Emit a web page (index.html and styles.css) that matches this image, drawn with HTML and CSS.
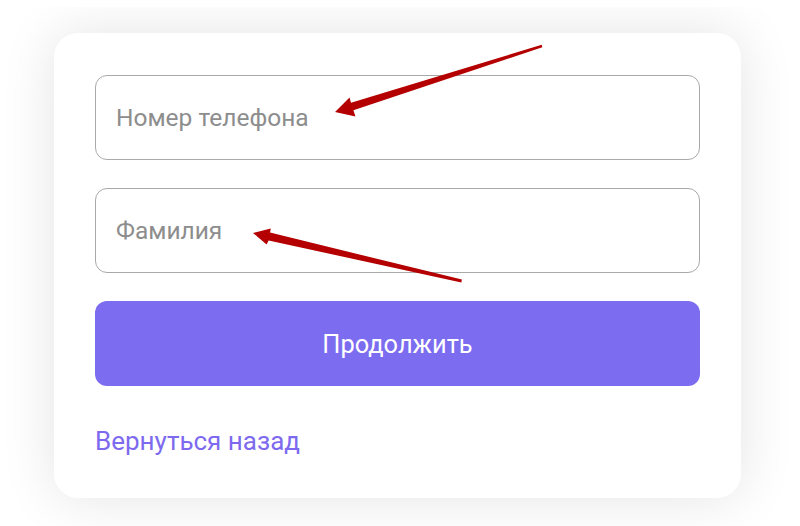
FILE: index.html
```html
<!DOCTYPE html>
<html lang="ru">
<head>
<meta charset="utf-8">
<title>Форма</title>
<link rel="stylesheet" href="styles.css">
</head>
<body>
<div class="stage">
  <div class="card">
    <input class="field" type="text" placeholder="Номер телефона">
    <input class="field" type="text" placeholder="Фамилия">
    <button class="btn" type="button">Продолжить</button>
    <a class="back" href="#">Вернуться назад</a>
  </div>
</div>
<svg class="arrows" width="800" height="526" viewBox="0 0 800 526" aria-hidden="true">
  <polygon fill="#b40000" points="335,112 349.5,97.5 351,102.8 541.7,44.8 542.3,47.2 353.4,110.2 355.5,116.5"/>
  <polygon fill="#b40000" points="253,233 270.8,228.6 270,232.6 461.9,279.6 461.3,282.4 268.6,240.5 266.6,244.6"/>
</svg>
</body>
</html>
```
FILE: styles.css
```css
html, body {
  margin: 0;
  padding: 0;
  background: #ffffff;
}
body {
  width: 800px;
  height: 526px;
  overflow: hidden;
  position: relative;
  font-family: Roboto, "Liberation Sans", sans-serif;
}
.stage {
  margin-top: 7px;
  height: 519px;
  overflow: hidden;
  padding: 26px 0 0 54px;
  box-sizing: border-box;
}
.card {
  width: 687px;
  height: 465px;
  box-sizing: border-box;
  background: #ffffff;
  border-radius: 24px;
  box-shadow: 0 0 55px rgba(0, 0, 0, 0.11);
  padding: 42px 41px 0 41px;
  display: flex;
  flex-direction: column;
}
.field {
  height: 85px;
  box-sizing: border-box;
  border: 1px solid #a9a9a9;
  border-radius: 12px;
  padding: 0 20px;
  font-family: inherit;
  font-size: 24.5px;
  color: #333;
  background: #fff;
  margin: 0 0 28px 0;
  outline: none;
}
.field::placeholder {
  color: #8d8d8d;
}
.btn {
  height: 85px;
  border: none;
  border-radius: 12px;
  background: #7b6cf0;
  color: #ffffff;
  font-family: inherit;
  font-size: 25.4px;
  margin: 0;
  padding: 0;
}
.back {
  margin-top: 40px;
  align-self: flex-start;
  font-size: 26px;
  line-height: 30px;
  color: #7e6aee;
  text-decoration: none;
}
.arrows {
  position: absolute;
  left: 0;
  top: 0;
  pointer-events: none;
}
```
